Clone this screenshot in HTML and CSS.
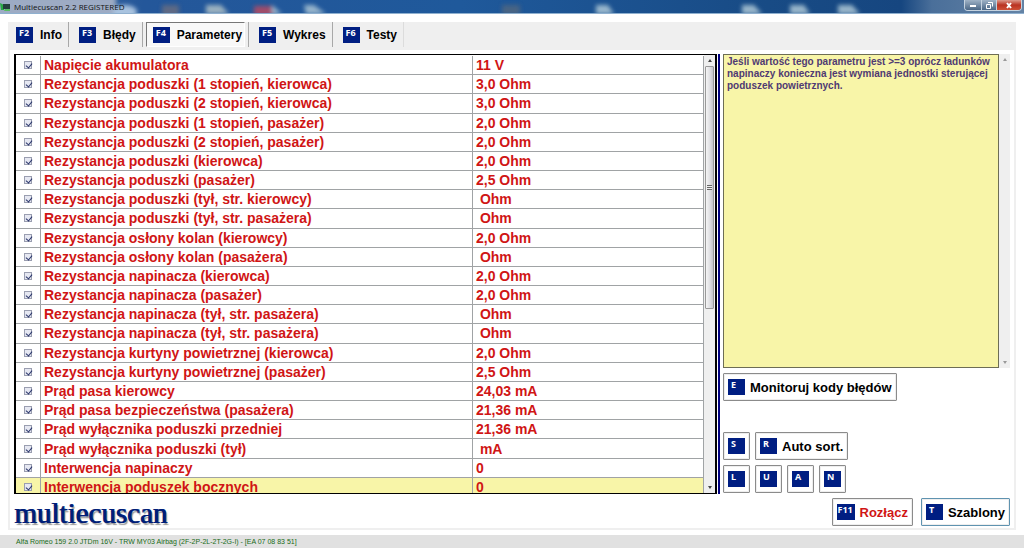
FILE: index.html
```html
<!DOCTYPE html>
<html lang="pl">
<head>
<meta charset="UTF-8">
<meta name="viewport" content="width=device-width, initial-scale=1.0">
<title>Multiecuscan 2.2 REGISTERED</title>
<link rel="stylesheet" href="styles.css">
</head>
<body>

<header class="titlebar">
  <svg class="wallpaper" width="1024" height="14" aria-hidden="true">
    <defs><filter id="soft" x="-20%" y="-50%" width="140%" height="200%"><feGaussianBlur stdDeviation="2"/></filter></defs>
    <g filter="url(#soft)">
      <rect x="-10" y="-4" width="126" height="22" fill="#9dabc4"/>
      <ellipse cx="125" cy="12" rx="12" ry="7" fill="#a9c3df"/>
    </g>
    <g filter="url(#soft)" opacity="0.8">
      <path d="M162 5h17v12h-17z" fill="#6c6e80"/>
      <path d="M206 5h15l8 9h-23z" fill="#b9c8c9"/>
      <path d="M254 6h20v10h-20z" fill="#c04a5e"/>
      <path d="M272 5l10 9h-10zM304 5h10l12 9h-20z" fill="#b3cbd8"/>
      <path d="M502 5h18v10h-18z" fill="#526780"/>
      <path d="M596 5h12l6 9h-18zM742 5h12l8 9h-20zM790 5h14l6 9h-20zM838 5h14l8 9h-22z" fill="#b8d0dc"/>
    </g>
  </svg>
  <svg class="app-icon" width="12" height="12" viewBox="0 0 12 12" aria-hidden="true">
    <path d="M0 2l4 2v5H1z" fill="#27a844"/>
    <path d="M3 3h7v5H3z" fill="#243f3c"/>
    <path d="M5 8h5v2H4z" fill="#58bd63"/>
  </svg>
  <span class="title">Multiecuscan 2.2 REGISTERED</span>
  <div class="window-buttons">
    <button type="button" aria-label="Minimalizuj"><svg width="16" height="10"><path d="M5 5h6v2H5z" fill="#fff"/></svg></button>
    <button type="button" aria-label="Przywróć"><svg width="14" height="10"><path d="M6 2.500h4.500v4M4.500 4.500h4v4h-4z" fill="none" stroke="#fff"/></svg></button>
    <button type="button" class="close" aria-label="Zamknij"><svg width="24" height="10"><path d="M10 3l4 5M14 3l-4 5" stroke="#fff" stroke-width="2"/></svg></button>
  </div>
</header>

<main class="window">
  <nav class="tabs">
    <button type="button" class="tab"><span class="key">F2</span>Info</button>
    <button type="button" class="tab"><span class="key">F3</span>Błędy</button>
    <button type="button" class="tab active"><span class="key">F4</span>Parametery</button>
    <button type="button" class="tab"><span class="key">F5</span>Wykres</button>
    <button type="button" class="tab"><span class="key">F6</span>Testy</button>
  </nav>

  <div class="content">
    <section class="grid">
      <div class="rows">
        <table>
          <colgroup><col class="col-check"><col class="col-name"><col></colgroup>
          <tbody id="params"></tbody>
        </table>
      </div>
      <div class="scrollbar">
        <span class="arrow up"></span>
        <span class="thumb"></span>
        <span class="arrow down"></span>
      </div>
    </section>

    <aside class="side">
      <div class="note">
        <textarea readonly aria-label="Opis parametru">Jeśli wartość tego parametru jest &gt;=3 oprócz ładunków napinaczy konieczna jest wymiana jednostki sterującej poduszek powietrznych.</textarea>
        <div class="scrollbar disabled">
          <span class="arrow up"></span>
          <span class="arrow down"></span>
        </div>
      </div>
      <div class="buttons monitor">
        <button type="button" class="btn"><span class="key">E</span>Monitoruj kody błędów</button>
      </div>
      <div class="buttons">
        <button type="button" class="btn" aria-label="S"><span class="key">S</span></button>
        <button type="button" class="btn"><span class="key">R</span>Auto sort.</button>
      </div>
      <div class="buttons">
        <button type="button" class="btn" aria-label="L"><span class="key">L</span></button>
        <button type="button" class="btn" aria-label="U"><span class="key">U</span></button>
        <button type="button" class="btn" aria-label="A"><span class="key">A</span></button>
        <button type="button" class="btn" aria-label="N"><span class="key">N</span></button>
      </div>
    </aside>
  </div>

  <div class="bottom">
    <div class="logo">multiecuscan</div>
    <button type="button" class="btn disconnect"><span class="key wide">F11</span>Rozłącz</button>
    <button type="button" class="btn templates"><span class="key">T</span>Szablony</button>
  </div>
</main>

<footer class="status">Alfa Romeo 159 2.0 JTDm 16V - TRW MY03 Airbag (2F-2P-2L-2T-2G-I) - [EA 07 08 83 51]</footer>

<script src="script.js"></script>
</body>
</html>
```
FILE: styles.css
```css
* {
  box-sizing: border-box;
}
body {
  display: flex;
  flex-direction: column;
  height: 100vh;
  margin: 0;
  background: #fff;
  font-family: "Liberation Sans", Arial, sans-serif;
}
button {
  margin: 0;
  font: bold 13px "Liberation Sans", Arial, sans-serif;
  color: #000;
}

/* title bar */
.titlebar {
  position: relative;
  display: flex;
  align-items: center;
  height: 14px;
  flex: none;
  overflow: hidden;
  background: linear-gradient(to right, #51749f 0, #24579a 14%, #1f599b 45%, #184b85 75%, #164680 88%, #4a6f9a 91%, #6483a5 100%);
  border-bottom: 1px solid #8fb0cf;
}
.wallpaper {
  position: absolute;
  left: 0;
  top: 0;
}
.app-icon {
  position: relative;
}
.title {
  position: relative;
  margin-left: 2px;
  flex: 1;
  font: 8px "Open Sans", "Noto Sans", sans-serif;
  color: #111;
}
.window-buttons {
  position: relative;
  display: flex;
  align-self: flex-start;
  margin-right: 2px;
  border: 1px solid #c4d2df;
  border-top: 0;
  border-radius: 0 0 4px 4px;
  overflow: hidden;
}
.window-buttons button {
  display: flex;
  padding: 0;
  border: 0;
  border-right: 1px solid #c4d2df;
  background: linear-gradient(#9fb2c6, #4b6786);
}
.window-buttons .close {
  border-right: 0;
  background: linear-gradient(#dc9a8c, #b93322 50%, #cf5137);
}

/* main window */
.window {
  display: flex;
  flex-direction: column;
  flex: 1;
  min-height: 0;
  margin: 8px 8px 5px;
  border: 2px solid #efefef;
  border-top: 0;
}
.tabs {
  display: flex;
  height: 28px;
  flex: none;
  margin: 0 -2px;
  padding-bottom: 3px;
  background: #efefef;
}
.tab {
  display: flex;
  align-items: center;
  gap: 7px;
  padding: 0 6px 0 10px;
  border: 0;
  border-right: 1px solid #a8a8a8;
  background: none;
  font-size: 12px;
}
.tab:first-child {
  padding-left: 8px;
}
.tab:last-child {
  border-color: #dcdcdc;
}
.tab.active {
  margin: 0 3px;
  padding: 0 2px 0 6px;
  border: 1px solid #777;
  border-right-color: #fff;
  border-bottom-color: #fff;
  background: #f8f8f8;
}
.tab.active + .tab {
  border-left: 1px solid #a8a8a8;
}
.key {
  width: 17px;
  height: 16px;
  padding-left: 3px;
  background: #001e82;
  color: #fff;
  font: bold 9px/12px "Open Sans", "Noto Sans", sans-serif;
  text-align: left;
}
.key.wide {
  width: 18px;
  padding-left: 1px;
}

.content {
  display: flex;
  flex: 1;
  min-height: 0;
  padding: 4px 4px 0;
}

/* parameter list */
.grid {
  display: flex;
  flex: 1;
  border: 1px solid #000;
  border-width: 1px 2px;
  overflow: hidden;
}
.rows {
  flex: 1;
  padding-top: 1px;
  overflow: hidden;
}
table {
  width: 100%;
  height: 441px;
  table-layout: fixed;
  border-spacing: 0;
  color: #d01515;
  font-weight: bold;
  font-size: 14px;
  line-height: 18px;
}
.col-check {
  width: 25px;
}
.col-name {
  width: 432px;
}
td {
  padding: 0 0 0 3px;
  border-right: 1px solid #a0a3a5;
  border-bottom: 1px solid #a0a3a5;
  white-space: pre;
}
td:first-child {
  padding: 0;
  text-align: center;
  line-height: 0;
}
tr.selected {
  background: #f8f5a8;
}
td input {
  appearance: none;
  width: 8px;
  height: 8px;
  margin: 0;
  border: 1px solid #9a9eb0;
  background: #e6e8f2;
}
td input:checked::before {
  content: "";
  display: block;
  width: 3px;
  height: 5px;
  margin-left: 2px;
  border: solid #29356b;
  border-width: 0 1px 1px 0;
  transform: rotate(40deg);
}

.scrollbar {
  display: flex;
  flex-direction: column;
  align-items: center;
  width: 11px;
  flex: none;
  background: #efefef;
}
.arrow {
  height: 11px;
  width: 11px;
  flex: none;
}
.arrow::before {
  content: "";
  display: block;
  margin: 4px auto;
  width: 0;
  border: 2px solid transparent;
}
.up::before {
  border-top: 0;
  border-bottom: 3px solid #444;
}
.down {
  margin-top: auto;
}
.down::before {
  border-bottom: 0;
  border-top: 3px solid #444;
}
.disabled .up::before {
  border-bottom-color: #999;
}
.disabled .down::before {
  border-top-color: #999;
}
.thumb {
  display: flex;
  align-items: center;
  justify-content: center;
  width: 9px;
  height: 243px;
  border: 1px solid #999;
  border-radius: 1px;
  background: linear-gradient(to right, #f5f5f5, #e1e1e4 50%, #c4c4ca);
}
.thumb::before {
  content: "";
  width: 5px;
  height: 5px;
  background: repeating-linear-gradient(#666 0, #666 1px, #eee 1px, #eee 2px);
}

/* right side */
.side {
  display: flex;
  flex-direction: column;
  width: 292px;
  flex: none;
  margin-left: 1px;
  padding: 0 0 1px 3px;
  border-left: 2px solid #000080;
}
.note {
  display: flex;
  flex: 1;
}
.note textarea {
  flex: 1;
  margin: 0;
  padding: 1px 0 0 3px;
  border: 1px solid #6d6d55;
  border-radius: 0;
  outline: 0;
  resize: none;
  overflow: hidden;
  background: #f8f5a8;
  color: #4f3a72;
  font: bold 10px/12px "Liberation Sans", Arial, sans-serif;
}
.buttons {
  display: flex;
  gap: 5px;
  margin-top: 5px;
}
.monitor {
  margin-bottom: 26px;
}
.btn {
  display: flex;
  align-items: center;
  gap: 5px;
  height: 28px;
  padding: 0 4px;
  border: 1px solid #8b8b8b;
  border-radius: 1px;
  background: #fff;
  box-shadow: inset 0 0 0 1px #eee;
}

.bottom {
  display: flex;
  align-items: center;
  height: 34px;
  flex: none;
  gap: 8px;
  padding: 2px 4px 0;
}
.logo {
  flex: 1;
  padding-top: 2px;
  color: #001e78;
  font: 29px/30px "Liberation Serif", "Times New Roman", serif;
  text-shadow: 1px 0 0 #001e78, 2px 2px 1px #999;
}
.disconnect {
  color: #d01515;
}
.templates {
  border-color: #5f93b0;
}

.status {
  height: 13px;
  flex: none;
  padding-left: 16px;
  background: #e1e1e1;
  color: #176b17;
  font-size: 7px;
  line-height: 13px;
}
```
FILE: script.js
```javascript
var params = [
  ['Napięcie akumulatora', '11 V'],
  ['Rezystancja poduszki (1 stopień, kierowca)', '3,0 Ohm'],
  ['Rezystancja poduszki (2 stopień, kierowca)', '3,0 Ohm'],
  ['Rezystancja poduszki (1 stopień, pasażer)', '2,0 Ohm'],
  ['Rezystancja poduszki (2 stopień, pasażer)', '2,0 Ohm'],
  ['Rezystancja poduszki (kierowca)', '2,0 Ohm'],
  ['Rezystancja poduszki (pasażer)', '2,5 Ohm'],
  ['Rezystancja poduszki (tył, str. kierowcy)', ' Ohm'],
  ['Rezystancja poduszki (tył, str. pasażera)', ' Ohm'],
  ['Rezystancja osłony kolan (kierowcy)', '2,0 Ohm'],
  ['Rezystancja osłony kolan (pasażera)', ' Ohm'],
  ['Rezystancja napinacza (kierowca)', '2,0 Ohm'],
  ['Rezystancja napinacza (pasażer)', '2,0 Ohm'],
  ['Rezystancja napinacza (tył, str. pasażera)', ' Ohm'],
  ['Rezystancja napinacza (tył, str. pasażera)', ' Ohm'],
  ['Rezystancja kurtyny powietrznej (kierowca)', '2,0 Ohm'],
  ['Rezystancja kurtyny powietrznej (pasażer)', '2,5 Ohm'],
  ['Prąd pasa kierowcy', '24,03 mA'],
  ['Prąd pasa bezpieczeństwa (pasażera)', '21,36 mA'],
  ['Prąd wyłącznika poduszki przedniej', '21,36 mA'],
  ['Prąd wyłącznika poduszki (tył)', ' mA'],
  ['Interwencja napinaczy', '0'],
  ['Interwencja poduszek bocznych', '0']
];

var tbody = document.getElementById('params');
for (var i = 0; i < params.length; i++) {
  var row = tbody.insertRow();
  var box = document.createElement('input');
  box.type = 'checkbox';
  box.checked = true;
  box.setAttribute('aria-labelledby', 'param' + i);
  row.insertCell().appendChild(box);
  var nameCell = row.insertCell();
  nameCell.id = 'param' + i;
  nameCell.textContent = params[i][0];
  row.insertCell().textContent = params[i][1];
}
// last row is the selected one
tbody.rows[params.length - 1].className = 'selected';
```
